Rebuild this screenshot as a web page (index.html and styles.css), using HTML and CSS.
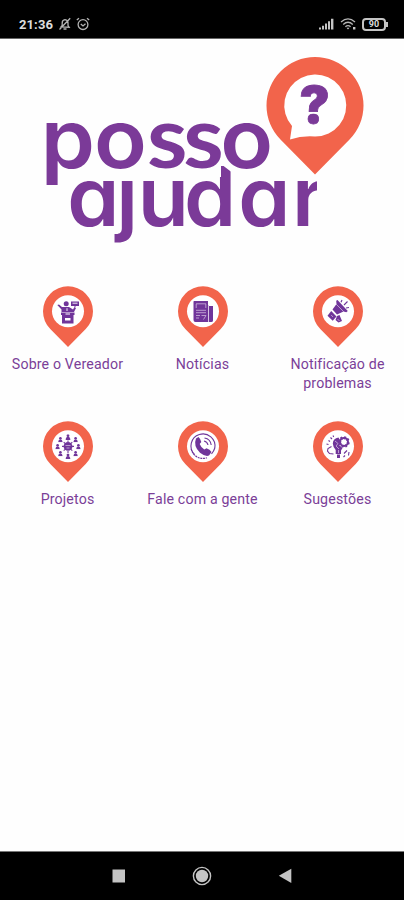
FILE: index.html
```html
<!DOCTYPE html>
<html lang="pt-BR">
<head>
    <meta charset="UTF-8">
    <meta name="viewport" content="width=device-width, initial-scale=1.0">
    <title>Posso Ajudar</title>
    <link rel="stylesheet" href="styles.css">
</head>
<body>
    <svg class="defs" width="0" height="0">
        <symbol id="pin" viewBox="0 0 50 61">
            <path class="pin-shape" d="M25 61 L7.3 43 A25 25 0 1 1 42.7 43 Z"/>
            <circle class="pin-hole" cx="25" cy="25.3" r="16"/>
        </symbol>
    </svg>

    <div class="status-bar">
        <span class="time">21:36</span>
        <svg class="status-icon bell" width="14" height="14" viewBox="0 0 14 14">
            <path d="M3 10 L4.2 8.5 V6 Q4.2 3 7 2.7 Q10 3 10 6 V8.5 L11.2 10.2 Z M5.5 12 H8.5 M1.5 12.5 L12.2 1.2"/>
        </svg>
        <svg class="status-icon" width="14" height="14" viewBox="0 0 14 14">
            <circle cx="7" cy="7.6" r="4.9"/>
            <path d="M4.8 7 L7 9 L9.5 6.8 M.8 3 L3 1.2 M11 1.2 L13.2 3"/>
        </svg>
        <div class="status-right">
            <svg width="17" height="12" viewBox="0 0 17 12">
                <path class="fill-gray" d="M1 9.5h2v2H1z M4 7.7h2v3.8H4z M7 5.5h2v6H7z M10 3.3h2v8.2h-2z M13 .7h2.4v10.8H13z"/>
            </svg>
            <svg class="status-icon wifi" width="17" height="14" viewBox="0 0 17 14">
                <path d="M1 5 Q8 -1.3 15 5 M3.2 7.4 Q8 3.2 12.8 7.4 M5.4 9.7 Q8 7.6 10.6 9.7"/>
                <path class="fill-gray" d="M6.5 10.8 h3 L8 12.5Z M13 10 h2.4 v2.4 H13z"/>
            </svg>
            <div class="battery">90</div>
        </div>
    </div>

    <main class="content">
        <svg class="logo" width="404" height="220" viewBox="0 40 404 220">
            <clipPath id="lower-line">
                <path d="M0 178 H115 V174 H122 L137 184 V260 H0 Z M137 177 H221 V164 L234 174 V177 H317 V260 H137 Z"/>
            </clipPath>
            <text class="logo-text" transform="scale(1.06 1)" y="168.2" x="38.4 88.6 138.7 173 207.8">po<tspan class="narrow">ss</tspan>o</text>
            <g clip-path="url(#lower-line)">
                <text class="logo-text" transform="scale(1.02 1)" y="226.4" x="66 114 135 180.5 233.7 286.3">ajudar</text>
            </g>
            <path class="pin-shape" d="M315 174.5 L280.7 139.8 A48.5 48.5 0 1 1 349.3 139.8 Z"/>
            <path class="pin-hole" d="M290 139.5 L292 126 A31 31 0 1 1 315 136.5 Q302 135.5 290 139.5 Z"/>
            <text class="logo-mark" x="314.5" y="122.5">?</text>
        </svg>

        <div class="menu">
            <a class="menu-item">
                <svg class="pin" width="50" height="61" viewBox="0 0 50 61">
                    <use href="#pin"/>
                    <g class="glyph">
                        <circle cx="23.2" cy="17.7" r="2.5"/>
                        <path d="M14.3 19 L16 18.5 L19 21 H26 L30 23.5 L31.5 21 L33 22 L31 26 H18.5 V23.5 Z"/>
                        <path d="M18 26.5 H31.5 V29 H30.5 V37.5 H19 V29 H18Z"/>
                        <path d="M28 15.5 H36 V20 H33 L31.5 21.5 V20 H28Z"/>
                        <path class="cut" d="M22 32 H27.5 V34.5 H22Z M22.5 27.5 H27 V28.5 H22.5Z"/>
                        <path class="cut-line" d="M29.5 17.2 H34.5 M24 22.2 V25"/>
                    </g>
                </svg>
                <span>Sobre o Vereador</span>
            </a>
            <a class="menu-item">
                <svg class="pin" width="50" height="61" viewBox="0 0 50 61">
                    <use href="#pin"/>
                    <g class="glyph">
                        <path d="M16 15 H30 V36 H17.5 Q15.5 36 15.5 34 V15.5Z M31 20 H35 V34.5 Q35 36 33.3 36 H31Z"/>
                        <path class="cut-line thin" d="M18 17.8 H28 M18 24.3 H28 M18 26.7 H28 M30.5 19 V36 M18.2 18 V22 M27.8 18 V22"/>
                        <path class="cut-line thin" d="M18 29.5 H22 M18 32 H21 M23.5 29.5 H28 L25.5 33.5"/>
                    </g>
                </svg>
                <span>Notícias</span>
            </a>
            <a class="menu-item">
                <svg class="pin" width="50" height="61" viewBox="0 0 50 61">
                    <use href="#pin"/>
                    <g class="glyph">
                        <path d="M23.2 14.8 L24.5 14 L34.8 25 L33.3 26.2 L30.5 25.5 L24 28.5 L19.5 23.5 L23.5 18Z"/>
                        <path d="M18.2 25 L23.5 30.5 L19.7 34.8 L14.5 29.8Z"/>
                        <path d="M24 30 L26.5 29 L29 35 L25.5 36.5 L22.5 34Z"/>
                        <path class="line" d="M28 16.3 L29 14 M31 19 L34.5 15.5 M33 22 L36 21.5"/>
                        <path class="cut-line thin" d="M23 18 L31 26 M18.2 29 L20 31 M24.5 33 L26.5 35"/>
                    </g>
                </svg>
                <span>Notificação de problemas</span>
            </a>
            <a class="menu-item">
                <svg class="pin" width="50" height="61" viewBox="0 0 50 61">
                    <symbol id="person" viewBox="0 0 6 6">
                        <circle cx="3" cy="1.5" r="1.5"/>
                        <path d="M.4 6 Q.7 2.7 3 2.7 Q5.3 2.7 5.6 6Z"/>
                    </symbol>
                    <use href="#pin"/>
                    <g class="glyph">
                        <circle cx="25" cy="25.4" r="4.4"/>
                        <path class="cut-line thin" d="M22.5 24.5 H27.5 M23.5 27 H26.5"/>
                        <path class="line" d="M25 19.5 V21 M25 30 V32 M19 25.4 H21 M29 25.4 H31 M20.7 21.2 L22 22.4 M29.3 21.2 L28 22.4 M20.7 29.6 L22 28.4 M29.3 29.6 L28 28.4"/>
                        <use href="#person" x="22.2" y="13.3" width="5.6" height="5.6"/>
                        <use href="#person" x="14.8" y="16" width="5.2" height="5.2"/>
                        <use href="#person" x="30" y="16" width="5.2" height="5.2"/>
                        <use href="#person" x="12" y="23" width="5.2" height="5.2"/>
                        <use href="#person" x="32.8" y="23" width="5.2" height="5.2"/>
                        <use href="#person" x="14.8" y="30" width="5.2" height="5.2"/>
                        <use href="#person" x="30" y="30" width="5.2" height="5.2"/>
                        <use href="#person" x="22.2" y="32.5" width="5.6" height="5.6"/>
                    </g>
                </svg>
                <span>Projetos</span>
            </a>
            <a class="menu-item">
                <svg class="pin" width="50" height="61" viewBox="0 0 50 61">
                    <use href="#pin"/>
                    <g class="glyph">
                        <path class="line" d="M16.5 33.5 A12 12 0 1 1 36.8 27 Q36 30 33.5 32.8"/>
                        <path class="line dashed" d="M13.2 28 A12 12 0 0 0 29 36.7"/>
                        <path d="M18 17.5 L20.5 16 Q22.3 17.5 23.3 21 L21.7 23 Q23 26.5 26.3 28.5 L28.5 27.2 Q32 28.5 33.5 31 L31 34.5 Q27.5 36 22 31.7 Q15 25 18 17.5Z"/>
                        <path class="line" d="M26.5 17 Q32.5 18 33.2 24 M26 20 Q29.3 20.7 30 24"/>
                    </g>
                </svg>
                <span>Fale com a gente</span>
            </a>
            <a class="menu-item">
                <svg class="pin" width="50" height="61" viewBox="0 0 50 61">
                    <use href="#pin"/>
                    <g class="glyph">
                        <path d="M25.5 16.5 Q20 17.5 19.8 22.5 Q20 26 22.7 29 V33 H28 V29.5 L29.5 27 L26 24 L27.5 20Z M24 33.5 H27 V37 H24Z"/>
                        <circle class="gear" cx="31" cy="20.9" r="4"/>
                        <path class="line gear-teeth" d="M26.7 20.9 A4.3 4.3 0 1 1 26.7 21"/>
                        <path class="cut-line thin" d="M22 20 L25 22.5 L23 25 L26 28 M25.5 29 V32"/>
                        <path class="line" d="M18.5 25.5 L15 27.5 L14.5 30 L16.5 32.5 L20.5 33 M17.5 16.5 L19 18 M15.5 19.5 L17 20.5 M13.5 23 L15.5 23.5 M20 14.5 L20.7 16"/>
                        <path class="line" d="M34 29.5 L31 32.5 M36 31 L35.5 34.5 M32 34.5 L30.5 36"/>
                    </g>
                </svg>
                <span>Sugestões</span>
            </a>
        </div>
    </main>

    <nav class="nav-bar">
        <svg width="20" height="20" viewBox="0 0 20 20">
            <rect class="fill-gray" x="3.5" y="3.5" width="12.5" height="13"/>
        </svg>
        <svg width="20" height="20" viewBox="0 0 20 20">
            <circle class="ring" cx="10" cy="10" r="8.6"/>
            <circle class="fill-gray" cx="10" cy="10" r="6.2"/>
        </svg>
        <svg width="20" height="20" viewBox="0 0 20 20">
            <path class="fill-gray" d="M3.8 9.7 L16.3 2.8 V17 Z"/>
        </svg>
    </nav>
</body>
</html>
```

FILE: styles.css
```css
* {
    margin: 0;
    padding: 0;
    box-sizing: border-box;
}

body {
    display: flex;
    flex-direction: column;
    height: 900px;
    background-color: #fefefe;
    font-family: Roboto, "Liberation Sans", sans-serif;
    color: #7b3f98;
    overflow: hidden;
}

svg {
    display: block;
    flex-shrink: 0;
}

.defs {
    position: absolute;
}

/* status bar */
.status-bar {
    display: flex;
    align-items: center;
    height: 39px;
    padding: 10px 16px 0 19px;
    background-color: #000;
    border-bottom: 1px solid #666;
    color: #ddd;
}

.time {
    width: 36px;
    font-size: 13px;
    font-weight: 700;
    letter-spacing: 0.1px;
}

.status-icon {
    fill: none;
    stroke: #b5b5b5;
    stroke-width: 1.3;
}

.bell {
    margin: 0 4px 0 3px;
}

.status-right {
    display: flex;
    align-items: center;
    margin-left: auto;
}

.wifi {
    margin: 0 5px;
}

.fill-gray {
    fill: #c4c4c4;
    stroke: none;
}

.battery {
    position: relative;
    width: 24px;
    height: 13px;
    margin-right: 2px;
    border: 2px solid #c4c4c4;
    border-radius: 4px;
    font-size: 9px;
    font-weight: 700;
    line-height: 9px;
    text-align: center;
}

.battery::after {
    content: "";
    position: absolute;
    right: -4px;
    top: 2px;
    width: 2px;
    height: 5px;
    background-color: #c4c4c4;
}

/* logo */
.content {
    flex: 1;
    padding-top: 1px;
}

.logo-text {
    font-family: Inter, "Open Sans", sans-serif;
    font-size: 82px;
    font-weight: 600;
    font-feature-settings: "cv11";
    fill: #7b3a98;
}

.narrow {
    font-family: Lato, Inter, sans-serif;
    font-size: 87px;
    font-weight: 700;
}

.logo-mark {
    font-family: Inter, "Open Sans", sans-serif;
    font-size: 51px;
    font-weight: 900;
    text-anchor: middle;
    fill: #7b3a98;
    stroke: #7b3a98;
    stroke-width: 0.8;
}

.pin-shape {
    fill: #f2644b;
}

.pin-hole {
    fill: #fff;
}

/* menu */
.menu {
    display: grid;
    grid-template-columns: repeat(3, 135px);
    grid-auto-rows: 135px;
    padding-top: 26px;
}

.menu-item {
    display: flex;
    flex-direction: column;
    align-items: center;
    gap: 8px;
    font-size: 14.2px;
    line-height: 18.5px;
    letter-spacing: 0.15px;
    text-align: center;
}

.menu-item span {
    max-width: 120px;
}

.glyph {
    fill: #70359a;
}

.glyph .line {
    fill: none;
    stroke: #70359a;
    stroke-width: 1.1;
}

.glyph .dashed {
    stroke-dasharray: 2 0.7;
}

.glyph .gear {
    fill: #fff;
    stroke: #70359a;
    stroke-width: 2;
}

.glyph .gear-teeth {
    stroke-width: 3;
    stroke-dasharray: 1.6 1.78;
}

.glyph .cut {
    fill: #fff;
}

.glyph .cut-line {
    fill: none;
    stroke: #fff;
    stroke-width: 0.9;
}

.glyph .thin {
    stroke: #cdb6dc;
    stroke-width: 0.8;
}

/* navigation bar */
.nav-bar {
    display: flex;
    justify-content: center;
    gap: 63px;
    height: 49px;
    padding-top: 14px;
    background-color: #000;
    border-top: 1px solid #777;
}

.ring {
    fill: none;
    stroke: #c4c4c4;
    stroke-width: 1.4;
}
```
